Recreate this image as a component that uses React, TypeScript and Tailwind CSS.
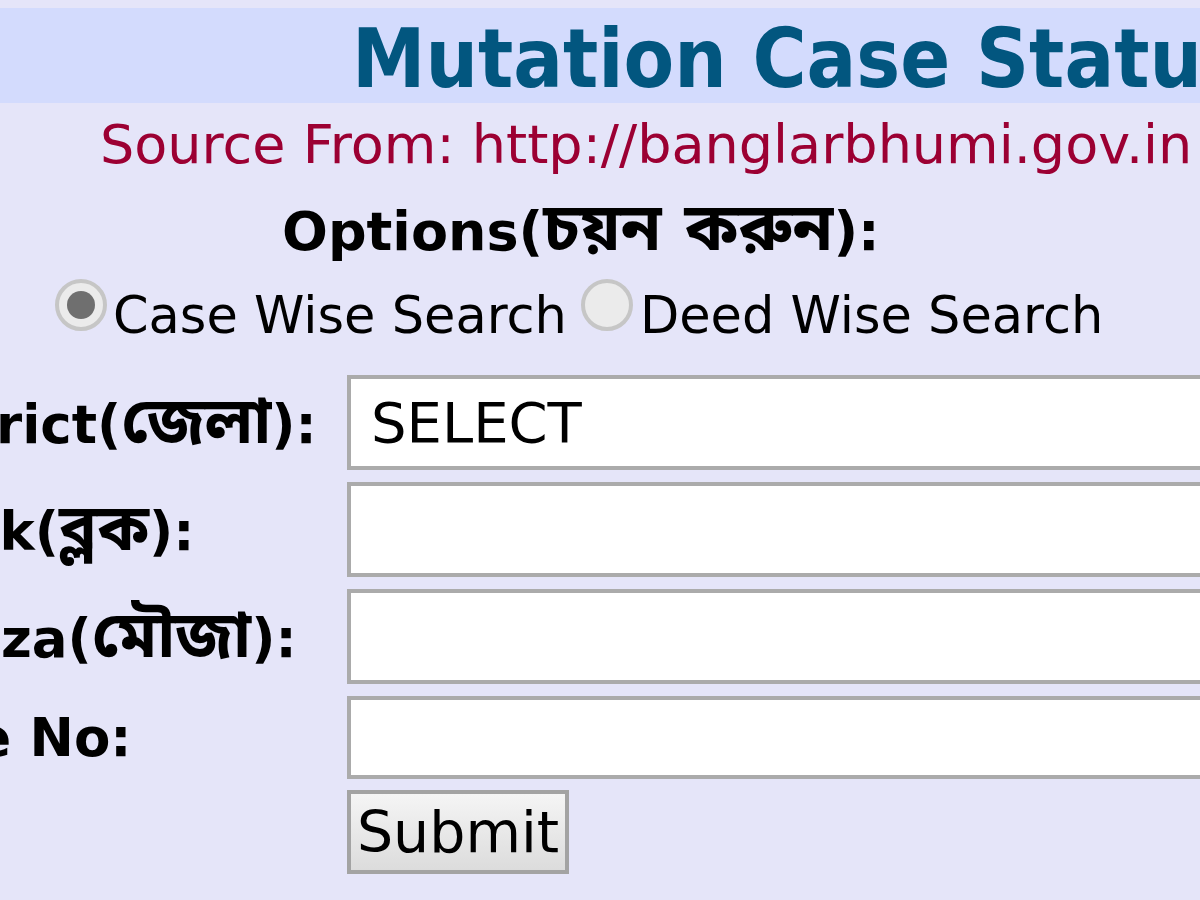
import React from "react";

const BN = '"DejaVu Sans", Verdana, "Noto Sans Bengali", "Lohit Bengali", "Noto Sans", sans-serif';

function Radio({ checked }: { checked?: boolean }) {
  return (
    <span className="mt-[2px] flex h-[52px] w-[52px] shrink-0 items-center justify-center rounded-full border-[4px] border-[#c6c6c6] bg-[#ebebeb]">
      {checked ? <span className="h-[28px] w-[28px] rounded-full bg-[#6f6f6f]" /> : null}
    </span>
  );
}

function Label({ pre, bn, post, off }: { pre: string; bn?: string; post: string; off: string }) {
  return (
    <div className="overflow-hidden whitespace-nowrap">
      <span className={`block font-bold text-[53px] leading-[70px] text-black ${off}`} style={{ fontFamily: BN }}>
        {pre}
        {bn ? <span className="text-[64px]">{bn}</span> : null}
        {post}
      </span>
    </div>
  );
}

export default function App() {
  return (
    <div className="h-[900px] w-[1200px] overflow-hidden bg-[#e5e5f9]" style={{ fontFamily: BN }}>
      <div className="h-[8px]" />
      <div className="h-[95px] overflow-hidden whitespace-nowrap bg-[#d3dbfd] pl-[352px] pt-[7px]">
        <span
          className="block text-[82px] font-bold leading-[88px] text-[#02567f]"
          style={{ fontFamily: '"DejaVu Sans Condensed", "DejaVu Sans", sans-serif', fontStretch: "condensed" }}
        >
          Mutation Case Status
        </span>
      </div>
      <div className="h-[83px] whitespace-nowrap pl-[100px] text-[54px] leading-[83px] text-[#9c0033]">
        Source From: http://banglarbhumi.gov.in
      </div>
      <div className="h-[91px] whitespace-nowrap pl-[282px] text-[54px] font-bold leading-[84px] text-black">
        Options(<span className="text-[66px]">চয়ন করুন</span>):
      </div>
      <div className="flex h-[77px] items-start whitespace-nowrap pl-[55px] text-[51px] leading-[77px] text-black">
        <Radio checked />
        <span className="ml-[6px]">Case Wise Search</span>
        <span className="ml-[14px]">
          <Radio />
        </span>
        <span className="ml-[7px]">Deed Wise Search</span>
      </div>
      <div className="mt-[21px] grid grid-cols-[347px_1fr] gap-y-[12px]">
        <div className="flex h-[95px] items-center">
          <Label pre="District(" bn="জেলা" post="):" off="ml-[-123px]" />
        </div>
        <div className="flex h-[95px] w-[900px] items-center border-[4px] border-[#ababab] bg-white pl-[20px] text-[56px] text-black">
          SELECT
        </div>
        <div className="flex h-[95px] items-center">
          <Label pre="Block(" bn="ব্লক" post="):" off="ml-[-127px]" />
        </div>
        <div className="h-[95px] w-[900px] border-[4px] border-[#ababab] bg-white" />
        <div className="flex h-[95px] items-center">
          <Label pre="Mouza(" bn="মৌজা" post="):" off="ml-[-126px]" />
        </div>
        <div className="h-[95px] w-[900px] border-[4px] border-[#ababab] bg-white" />
        <div className="flex h-[83px] items-center">
          <Label pre="Case No:" post="" off="ml-[-131px]" />
        </div>
        <div className="h-[83px] w-[900px] border-[4px] border-[#ababab] bg-white" />
        <div className="-mt-[1px]" />
        <div className="-mt-[1px]">
          <button className="flex h-[84px] w-[222px] items-center justify-center border-[4px] border-[#a3a3a3] bg-gradient-to-b from-[#f5f5f5] to-[#dcdcdc] text-[57px] leading-none text-black" style={{ fontFamily: BN }}>
            Submit
          </button>
        </div>
      </div>
    </div>
  );
}
